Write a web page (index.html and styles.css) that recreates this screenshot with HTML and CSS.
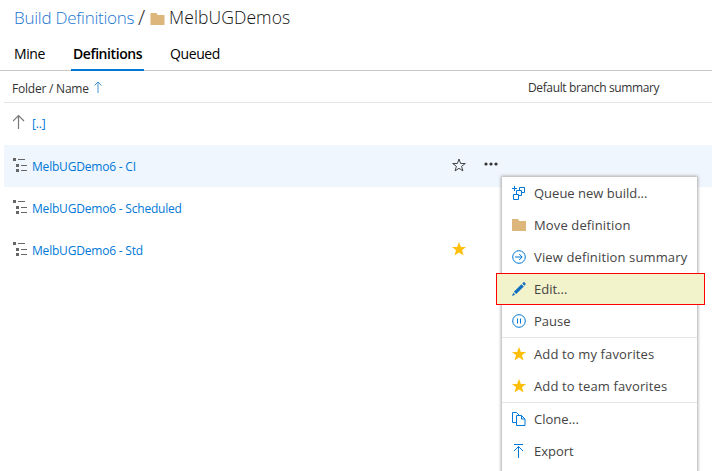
FILE: index.html
```html
<!DOCTYPE html>
<html lang="en">
<head>
<meta charset="utf-8">
<title>Build Definitions</title>
<link rel="stylesheet" href="styles.css">
</head>
<body>
<svg class="defs" width="0" height="0">
  <symbol id="folder" viewBox="0 0 14 12"><path fill="#dcb67a" d="M0 0h6l1.200 2H14v10H0z"/></symbol>
  <symbol id="star" viewBox="0 0 14 14"><path fill="#ffbf0b" d="M7 0l1.900 5H14l-4 3.300 1.500 5.200L7 10.500l-4.500 3L4 8.300 0 5h5.100z"/></symbol>
  <symbol id="tree" viewBox="0 0 14 14"><path fill="#666" d="M0 0h3v3H0zM3 6h3v3H3zM3 11h3v3H3zM5 1h7v1H5zM8 7h6v1H8zM8 12h6v1H8z"/></symbol>
</svg>
<header class="title">
  <a class="crumb">Build Definitions</a><span class="slash">/</span><svg class="title-folder" width="15" height="12"><use href="#folder"/></svg><span class="current">MelbUGDemos</span>
</header>
<nav class="tabs">
  <a class="tab mine"><span>Mine</span></a>
  <a class="tab active"><span>Definitions</span></a>
  <a class="tab queued"><span>Queued</span></a>
</nav>
<main class="grid">
  <div class="head">
    <span class="folder-name">Folder / Name</span>
    <svg class="sort" width="8" height="12" viewBox="0 0 8 12" fill="none" stroke="#4c93cf"><path d="M4 12V1M.5 4.500L4 1l3.500 3.500"/></svg>
    <span class="branch">Default branch summary</span>
  </div>
  <div class="row"><svg class="icon up-arrow" width="14" height="16" viewBox="0 0 14 16" fill="none" stroke="#777" stroke-width="1.200"><path d="M5.500 15V1.500M0 7L5.500 1.500 11 7"/></svg><a class="up">[..]</a></div>
  <div class="row selected"><svg class="icon tree" width="14" height="14"><use href="#tree"/></svg><a class="ci">MelbUGDemo6 - CI</a>
    <svg class="fav" width="14" height="14" viewBox="0 0 14 14" fill="none" stroke="#444"><path d="M7 1l1.600 4.500h4.700L9.600 8.300l1.300 4.600L7 10.300l-3.900 2.600 1.300-4.600L.7 5.500h4.700z"/></svg>
    <svg class="more" width="14" height="4" viewBox="0 0 14 4" fill="#333"><circle cx="2" cy="2" r="1.600"/><circle cx="7" cy="2" r="1.600"/><circle cx="12" cy="2" r="1.600"/></svg></div>
  <div class="row"><svg class="icon tree" width="14" height="14"><use href="#tree"/></svg><a class="scheduled">MelbUGDemo6 - Scheduled</a></div>
  <div class="row"><svg class="icon tree" width="14" height="14"><use href="#tree"/></svg><a class="std">MelbUGDemo6 - Std</a><svg class="fav" width="14" height="14"><use href="#star"/></svg></div>
</main>
<div class="menu">
  <div class="item"><svg width="14" height="14" viewBox="0 0 14 14" fill="none" stroke="#0078d7"><path d="M2.500 0v5M0 2.500h5M7.500 5V1.500h5v5h-3M4.500 8V4.500h5v5H6M1.500 8.500h5v5h-5z"/></svg><span>Queue new build...</span></div>
  <div class="item wide"><svg width="14" height="12"><use href="#folder"/></svg><span>Move definition</span></div>
  <div class="item wide"><svg width="14" height="14" viewBox="0 0 14 14" fill="none" stroke="#0078d7"><circle cx="7" cy="7" r="6.300"/><path d="M3 7h7M7.200 4L10.200 7l-3 3"/></svg><span>View definition summary</span></div>
  <div class="item edit"><svg width="14" height="14" viewBox="0 0 14 14" fill="#106ebe"><path d="M9.500 2.200l2.300 2.300-7.600 7.600-2.300-2.300zM10.300 1.400L11.500.2q.8-.4 1.600.7.900.8.400 1.600l-1.100 1.300zM1.300 10.800l1.900 1.900L0 14z"/></svg><span>Edit...</span></div>
  <div class="item"><svg width="14" height="14" viewBox="0 0 14 14" fill="none" stroke="#0078d7"><circle cx="7" cy="7" r="6.300"/><path d="M5.500 4.500v5M8.500 4.500v5"/></svg><span>Pause</span></div>
  <div class="item wide ruled"><svg width="14" height="14"><use href="#star"/></svg><span>Add to my favorites</span></div>
  <div class="item wide"><svg width="14" height="14"><use href="#star"/></svg><span>Add to team favorites</span></div>
  <div class="item ruled"><svg width="14" height="14" viewBox="0 0 14 14" fill="none" stroke="#0078d7"><path d="M4 10.500H.5V.5h4L7 3M4.500 3.500h5l3.500 3.500v6.500H4.500zM9.500 3.500v3.500H13"/></svg><span>Clone...</span></div>
  <div class="item"><svg width="14" height="14" viewBox="0 0 14 14" fill="none" stroke="#0078d7"><path d="M2 .5h9M6.500 14V2.500M2 7l4.500-4.500L11 7"/></svg><span>Export</span></div>
</div>
</body>
</html>
```
FILE: styles.css
```css
* { box-sizing: border-box; }
body { margin: 0; width: 712px; height: 471px; overflow: hidden; position: relative; background: #fff; color: #222; font-family: "Open Sans", "Noto Sans", sans-serif; }
.defs { position: absolute; }
svg { flex: none; }
.title { display: flex; align-items: center; height: 35px; padding-left: 14px; font-size: 17px; font-weight: 300; line-height: 35px; white-space: nowrap; }
.crumb { width: 124px; color: #1976d2; letter-spacing: -.25px; }
.slash { width: 12px; font-size: 21px; }
.title-folder { margin-top: 2px; }
.current { margin-left: 4px; font-size: 17.5px; letter-spacing: .1px; color: #111; }
.tabs { display: flex; height: 36px; border-bottom: 1px solid #c8c8c8; font-size: 14px; line-height: 37px; color: #000; }
.tab { height: 36px; white-space: nowrap; }
.mine { width: 71px; padding-left: 14px; letter-spacing: -.4px; }
.active { width: 73px; padding-left: 2px; font-weight: 600; border-bottom: 2px solid #0078d7; letter-spacing: -.42px; }
.queued { padding-left: 26px; letter-spacing: -.4px; }
.grid { margin-left: 4px; }
.head { display: flex; align-items: center; height: 32px; border-bottom: 1px solid #e6e6e6; padding-left: 8px; font-size: 12px; color: #333; white-space: nowrap; }
.folder-name { width: 82px; margin-top: 3px; letter-spacing: -.22px; }
.branch { margin-left: 426px; margin-top: 2px; letter-spacing: -.37px; }
.row { position: relative; display: flex; align-items: center; height: 42px; padding-left: 9px; font-size: 12px; white-space: nowrap; color: #0078d7; }
.row a { margin-left: 5px; letter-spacing: -.2px; }
.up-arrow { margin-top: -4px; }
.up { position: relative; top: -1px; }
.tree { margin-top: -3px; }
.selected { background: #eff6fd; }
.fav { position: absolute; left: 448px; top: 13px; }
.more { position: absolute; left: 480px; top: 17px; }
.menu { position: absolute; left: 502px; top: 177px; width: 195px; height: 310px; background: #fff; box-shadow: 0 0 3px 1px #aaa; font-size: 13px; color: #444; }
.item { display: flex; align-items: center; gap: 8px; height: 32px; padding-left: 10px; white-space: nowrap; }
.wide { letter-spacing: .13px; }
.edit { position: relative; width: 209px; margin-left: -6px; padding-left: 15px; background: #f2f2cb; border: 1px solid #f00; }
.ruled { height: 33px; border-top: 1px solid #e6e6e6; }
```
